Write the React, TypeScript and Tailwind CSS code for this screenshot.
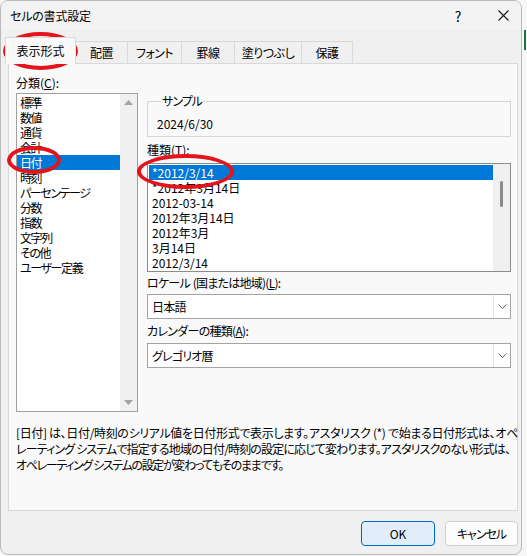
import React from 'react';

const categories = ['標準', '数値', '通貨', '会計', '日付', '時刻', 'パーセンテージ', '分数', '指数', '文字列', 'その他', 'ユーザー定義'];
const types = ['*2012/3/14', '*2012年3月14日', '2012-03-14', '2012年3月14日', '2012年3月', '3月14日', '2012/3/14'];

const tabs = [
  { label: '配置', cls: 'w-[52px]' },
  { label: 'フォント', cls: 'w-[54px]' },
  { label: '罫線', cls: 'w-[53px]' },
  { label: '塗りつぶし', cls: 'w-[67px]' },
  { label: '保護', cls: 'w-[51px]' },
];

const Chevron = () => (
  <svg width="9" height="5" viewBox="0 0 9 5" fill="none">
    <polyline points="0.5,0.5 4.5,4.5 8.5,0.5" stroke="#5f5f5f" strokeWidth="1" />
  </svg>
);

const Combo = ({ value }: { value: string }) => (
  <div className="flex h-[25px] w-full border border-[#a3a3a3] bg-white">
    <div className="flex flex-1 items-center pl-[4px] tracking-[-0.8px]">{value}</div>
    <div className="flex w-[17px] items-center justify-center border-l border-[#e3e3e3]">
      <Chevron />
    </div>
  </div>
);

export default function App() {
  return (
    <div className="relative h-[556px] w-[527px] overflow-hidden bg-[#f7f7f7] text-[12px] leading-[16px] text-black font-['Noto_Sans_CJK_JP',sans-serif] [font-feature-settings:'palt']">
      {/* excel row highlight behind the dialog */}
      <div className="absolute right-[1px] top-[30px] h-[20px] w-[2px] bg-[#1e7145]" />

      <div className="flex h-[555px] w-[522px] flex-col overflow-hidden rounded-[8px] border border-[#b9b9b9] bg-[#f0f0f0]">
        {/* title bar */}
        <div className="flex h-[29px] items-center bg-[#f3f3f3] pl-[9px] pr-[8px]">
          <span className="flex-1 tracking-[-0.2px]">セルの書式設定</span>
          <span className="w-[20px] text-center text-[14px]">?</span>
          <span className="ml-[25px] flex w-[20px] justify-center">
            <svg width="11" height="11" viewBox="0 0 11 11">
              <path d="M0.5 0.5 L10.5 10.5 M10.5 0.5 L0.5 10.5" stroke="#1a1a1a" strokeWidth="1.1" />
            </svg>
          </span>
        </div>

        {/* tabs */}
        <div className="flex h-[33px] items-end pl-[4px]">
          <div className="relative z-10 -mb-px flex h-[27px] w-[71px] items-center justify-center border-x border-t border-[#d9d9d9] bg-[#f9f9f9]">
            表示形式
          </div>
          {tabs.map((t) => (
            <div
              key={t.label}
              className={`flex h-[22px] items-center justify-center border-r border-t border-[#d9d9d9] bg-[#f0f0f0] tracking-[-0.5px] ${t.cls}`}
            >
              {t.label}
            </div>
          ))}
        </div>

        {/* panel */}
        <div className="ml-[7px] h-[448px] w-[510px] border border-[#d9d9d9] bg-[#f9f9f9] pl-[7px] pt-[11px]">
          <div className="flex items-start">
            {/* category column */}
            <div className="w-[122px]">
              <div>
                分類(<span className="underline">C</span>):
              </div>
              <div className="mt-[2px] flex h-[319px] border border-[#a0a0a0] bg-white">
                <div className="flex-1 pt-px tracking-[-1.4px]">
                  {categories.map((c) => (
                    <div
                      key={c}
                      className={`h-[15px] pl-[3px] leading-[15px] ${c === '日付' ? 'bg-[#0078d7] text-white' : ''}`}
                    >
                      {c}
                    </div>
                  ))}
                </div>
                <div className="flex w-[17px] flex-col justify-between bg-[#f0f0f0]">
                  <div className="flex h-[17px] items-center justify-center">
                    <svg width="9" height="5" viewBox="0 0 9 5">
                      <polygon points="4.5,0 9,5 0,5" fill="#a3a3a3" />
                    </svg>
                  </div>
                  <div className="flex h-[17px] items-center justify-center">
                    <svg width="9" height="5" viewBox="0 0 9 5">
                      <polygon points="0,0 9,0 4.5,5" fill="#a3a3a3" />
                    </svg>
                  </div>
                </div>
              </div>
            </div>

            {/* right column */}
            <div className="ml-[9px] w-[364px]">
              <fieldset className="mt-[18px] border border-[#d5d5d5] pb-[4px] pl-[9px] pt-[7px]">
                <legend className="ml-[4px] px-[1px] tracking-[-1px]">サンプル</legend>
                <div>2024/6/30</div>
              </fieldset>

              <div className="mt-[5px]">
                種類(<span className="underline">T</span>):
              </div>
              <div className="mt-[5px] flex h-[109px] border border-[#8c8c8c] bg-white">
                <div className="flex-1 pl-px pt-px">
                  {types.map((t, i) => (
                    <div
                      key={t + i}
                      className={`h-[15px] pl-[3px] leading-[15px] ${i === 0 ? 'bg-[#0078d7] text-white' : ''}`}
                    >
                      {t}
                    </div>
                  ))}
                </div>
                <div className="w-[17px] bg-[#f0f0f0]">
                  <div className="mx-auto mt-[17px] h-[26px] w-[3px] rounded-full bg-[#8b8b8b]" />
                </div>
              </div>

              <div className="mt-[3px] tracking-[-0.75px]">
                ロケール<span className="tracking-normal"> </span>(国または地域)(<span className="underline">L</span>):
              </div>
              <div className="mt-[3px]">
                <Combo value="日本語" />
              </div>

              <div className="mt-[4px] tracking-[-0.7px]">
                カレンダーの種類(<span className="underline">A</span>):
              </div>
              <div className="mt-[4px]">
                <Combo value="グレゴリオ暦" />
              </div>
            </div>
          </div>

          {/* description */}
          <div className="mt-[13px] whitespace-nowrap">
            <div className="tracking-[-0.35px]">[日付] は、日付/時刻のシリアル値を日付形式で表示します。アスタリスク (*) で始まる日付形式は、オペ</div>
            <div className="tracking-[-0.85px]">レーティング システムで指定する地域の日付/時刻の設定に応じて変わります。アスタリスクのない形式は、</div>
            <div className="tracking-[-1.35px]">オペレーティング システムの設定が変わってもそのままです。</div>
          </div>
        </div>

        {/* footer */}
        <div className="mt-[10px] flex justify-end gap-[10px] pr-[3px]">
          <button className="flex h-[25px] w-[74px] items-center justify-center rounded-[4px] border border-[#0067c0] bg-[#e1eefa]">
            OK
          </button>
          <button className="flex h-[25px] w-[73px] items-center justify-center rounded-[4px] border border-[#d0d0d0] bg-[#fdfdfd] tracking-[-1px]">
            キャンセル
          </button>
        </div>
      </div>

      {/* red annotation ellipses */}
      <div className="absolute left-[3px] top-[32px] h-[38px] w-[75px] rounded-[50%] border-[4px] border-[#e3141b]" />
      <div className="absolute left-[7px] top-[146px] h-[28px] w-[54px] rounded-[50%] border-[4px] border-[#e3141b]" />
      <div className="absolute left-[137px] top-[154px] h-[35px] w-[97px] rounded-[50%] border-[4px] border-[#e3141b]" />
    </div>
  );
}
